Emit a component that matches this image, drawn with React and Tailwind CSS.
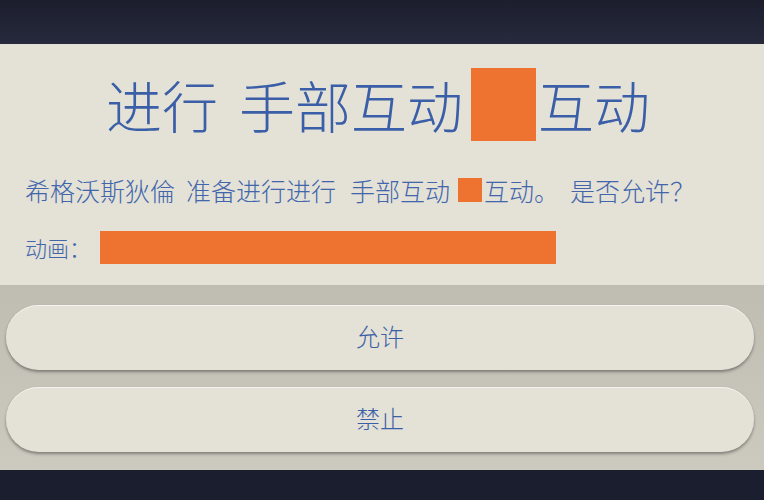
import React from 'react';

const cjk = { fontFamily: '"Noto Sans CJK SC", "Noto Sans", sans-serif' };

const Redacted = ({ className }) => <span className={`inline-block bg-[#ee7331] align-middle ${className}`} />;

const DialogButton = ({ children }) => (
  <button className="h-[65px] w-full rounded-full bg-[#e4e1d6] pb-[4px] text-[24px] font-light text-[#3b5fa6] shadow-[0_2px_3px_rgba(40,40,40,0.45),inset_0_1px_0_rgba(255,255,255,0.6)]">
    {children}
  </button>
);

export default function App() {
  return (
    <div className="flex h-[500px] w-[764px] flex-col overflow-hidden bg-[#1e2031]" style={cjk}>
      <div className="h-[44px] shrink-0 bg-gradient-to-b from-[#1c1e2e] to-[#262a3c]" />

      <div className="flex h-[241px] shrink-0 flex-col bg-[#e4e1d7] font-light text-[#3a5ea7]">
        <div className="flex h-[126px] items-center pb-[6px] pl-[106px] text-[56px] leading-none">
          <span>进行</span>
          <span className="ml-[21px]">手部互动</span>
          <Redacted className="ml-[8px] h-[73px] w-[65px]" />
          <span className="ml-[2px]">互动</span>
        </div>
        <div className="flex h-[40px] items-center pl-[25px] text-[25px] leading-none text-[#4166ab]">
          <span>希格沃斯狄倫</span>
          <span className="ml-[11px]">准备进行进行</span>
          <span className="ml-[14px]">手部互动</span>
          <Redacted className="ml-[8px] h-[24px] w-[24px]" />
          <span className="ml-[2px]">互动。</span>
          <span className="ml-[11px]">是否允许？</span>
        </div>
        <div className="mt-[20px] flex h-[34px] items-center pl-[25px] text-[22px] leading-none text-[#4166ab]">
          <span>动画：</span>
          <Redacted className="ml-[9px] h-[33px] w-[456px]" />
        </div>
      </div>

      <div className="flex h-[185px] shrink-0 flex-col gap-[17px] bg-gradient-to-b from-[#bfbcb2] to-[#ccc9be] pt-[20px] pl-[6px] pr-[10px]">
        <DialogButton>允许</DialogButton>
        <DialogButton>禁止</DialogButton>
      </div>

      <div className="flex-1 bg-[#1b1e2f]" />
    </div>
  );
}
